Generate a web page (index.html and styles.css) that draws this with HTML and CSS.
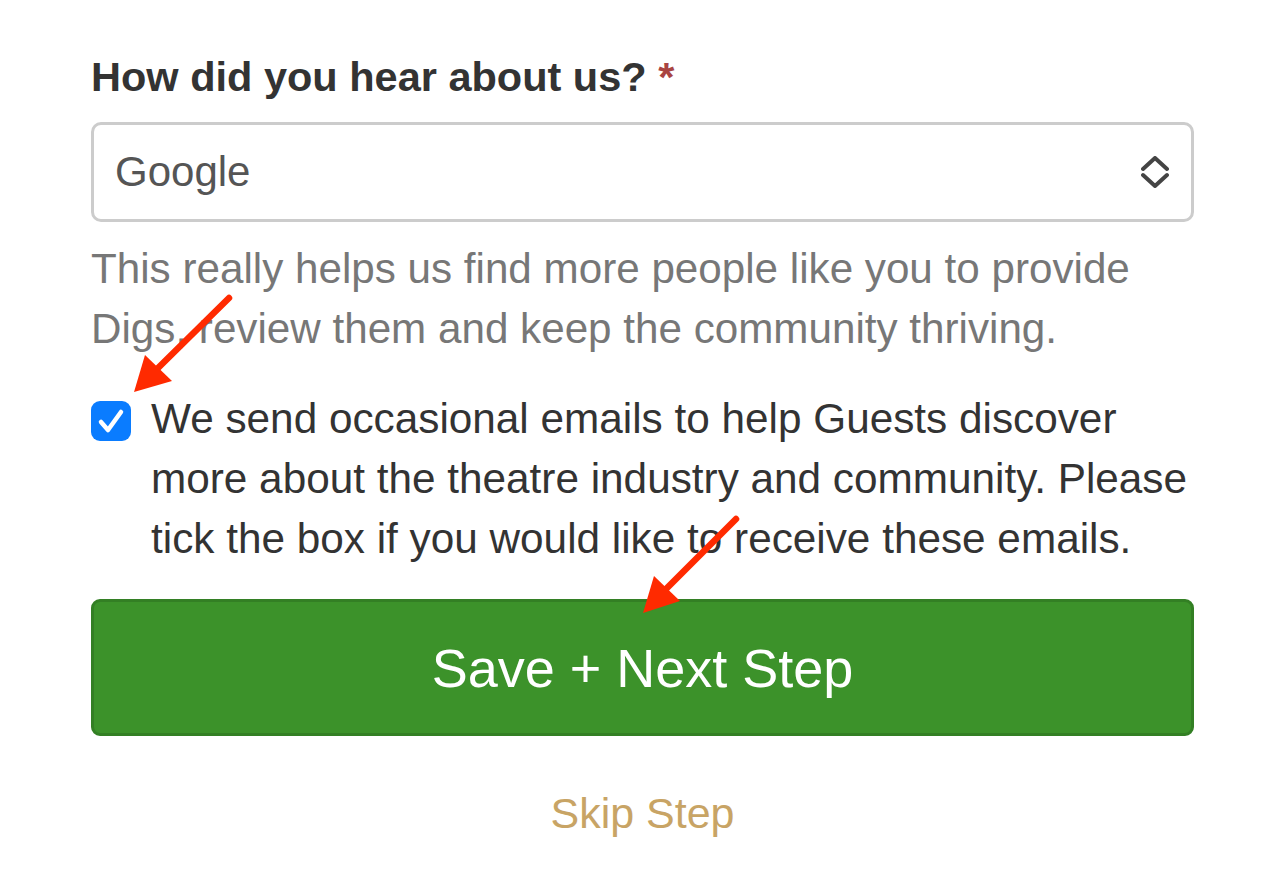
FILE: index.html
```html
<!DOCTYPE html>
<html lang="en">
<head>
<meta charset="utf-8">
<title>How did you hear about us?</title>
<link rel="stylesheet" href="styles.css">
</head>
<body>
<div class="page">
  <form class="form">
    <label class="label" for="source">How did you hear about us? <span class="req">*</span></label>
    <div class="select">
      <span class="select-value">Google</span>
      <svg class="select-icon" width="28" height="32" viewBox="0 0 28 32" aria-hidden="true">
        <path d="M2 13 L14 2 L26 13" fill="none" stroke="#444" stroke-width="4" stroke-linecap="round" stroke-linejoin="round"/>
        <path d="M2 19 L14 30 L26 19" fill="none" stroke="#444" stroke-width="4" stroke-linecap="round" stroke-linejoin="round"/>
      </svg>
    </div>
    <p class="help">This really helps us find more people like you to provide Digs, review them and keep the community thriving.</p>
    <div class="check-row">
      <span class="checkbox">
        <svg width="40" height="40" viewBox="0 0 40 40" aria-hidden="true">
          <path d="M10 21 L17 29 L30 11" fill="none" stroke="#fff" stroke-width="4.5" stroke-linecap="round" stroke-linejoin="round"/>
        </svg>
      </span>
      <span class="check-text">We send occasional emails to help Guests discover more about the theatre industry and community. Please tick the box if you would like to receive these emails.</span>
    </div>
    <button type="button" class="btn">Save + Next Step</button>
    <a class="skip" href="#">Skip Step</a>
  </form>
  <svg class="arrows" width="1283" height="895" viewBox="0 0 1283 895" aria-hidden="true">
    <line x1="229" y1="298" x2="158" y2="368" stroke="#ff2a00" stroke-width="6.5" stroke-linecap="round"/>
    <polygon points="134,392 145,355 172,381" fill="#ff2a00"/>
    <line x1="736" y1="519" x2="664" y2="591" stroke="#ff2a00" stroke-width="6.5" stroke-linecap="round"/>
    <polygon points="643,613 654,576 680,601" fill="#ff2a00"/>
  </svg>
</div>
</body>
</html>
```
FILE: styles.css
```css
html, body {
  margin: 0;
  padding: 0;
  background: #fff;
}
body {
  font-family: "Liberation Sans", Arial, sans-serif;
  color: #333;
}
.page {
  position: relative;
  width: 1283px;
  height: 895px;
  overflow: hidden;
}
.form {
  display: flex;
  flex-direction: column;
  width: 1103px;
  padding: 52px 0 0 91px;
}
.label {
  font-size: 41.5px;
  font-weight: bold;
  line-height: 50px;
  color: #333;
}
.req {
  color: #a94442;
}
.select {
  margin-top: 20px;
  height: 100px;
  box-sizing: border-box;
  border: 3px solid #ccc;
  border-radius: 10px;
  display: flex;
  align-items: center;
  justify-content: space-between;
  padding: 0 22px 0 21px;
}
.select-value {
  font-size: 42px;
  color: #555;
}
.help {
  margin: 17px 0 0;
  font-size: 42.2px;
  line-height: 60px;
  color: #777;
}
.check-row {
  margin-top: 30px;
  display: flex;
  align-items: flex-start;
  gap: 20px;
}
.checkbox {
  flex: none;
  width: 40px;
  height: 40px;
  margin-top: 12px;
  border-radius: 9px;
  background: #0a7cff;
  display: flex;
}
.check-text {
  font-size: 42.3px;
  line-height: 60px;
  color: #333;
  margin-right: -8px;
}
.btn {
  margin-top: 30px;
  height: 137px;
  border: 3px solid #337f24;
  border-radius: 9px;
  background: #3c922a;
  color: #fff;
  font-family: "Liberation Sans", Arial, sans-serif;
  font-size: 54px;
  padding: 0;
}
.skip {
  margin-top: 47px;
  text-align: center;
  font-size: 43px;
  line-height: 60px;
  color: #c8a465;
  text-decoration: none;
}
.arrows {
  position: absolute;
  left: 0;
  top: 0;
  pointer-events: none;
}
```
